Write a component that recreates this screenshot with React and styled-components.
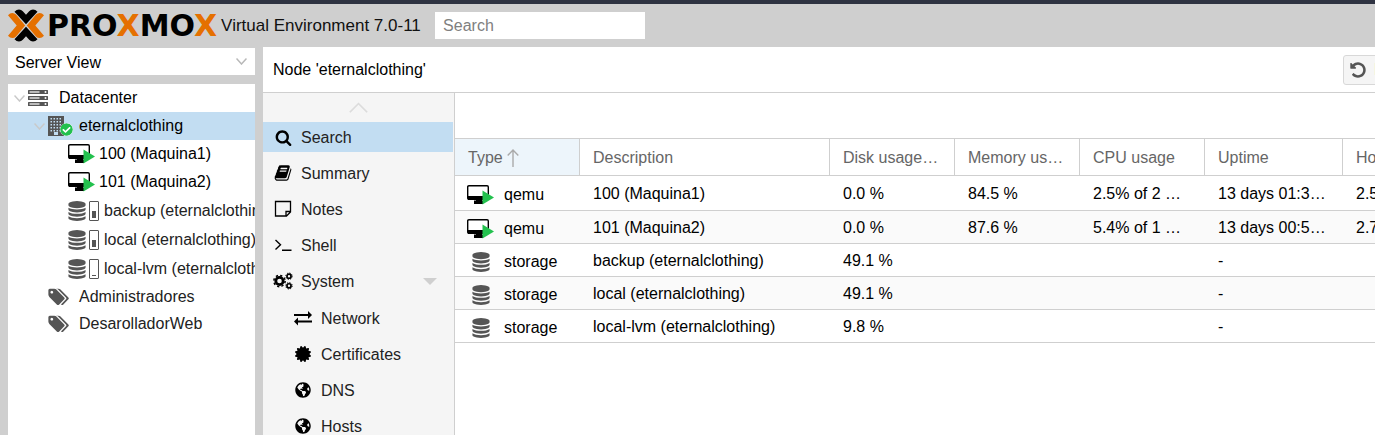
import React from "react";
import styled, { createGlobalStyle, css } from "styled-components";
import { FaGlobeAmericas, FaCertificate, FaCheckCircle } from "react-icons/fa";

const GlobalStyle = createGlobalStyle`
  *, *::before, *::after { box-sizing: border-box; }
  html, body, #root { height: 100%; }
  body {
    margin: 0;
    overflow: hidden;
    font: 16px/20px "Liberation Sans", Arial, sans-serif;
    color: #000;
    background: #cfcfcf;
  }
  button, input, select { font: inherit; color: inherit; }
  ul { list-style: none; margin: 0; padding: 0; }
  svg { display: block; flex: none; }
`;

/* ---------- icons ---------- */

const Glyph = ({ d, size = 18, box = "0 0 1792 1792", width }) => (
  <svg width={width || size} height={size} viewBox={box} fill="currentColor" aria-hidden="true">
    <path d={d} />
  </svg>
);

const paths = {
  search:
    "M1216 832q0-185-131.5-316.5t-316.5-131.5-316.5 131.5-131.5 316.5 131.5 316.5 316.5 131.5 316.5-131.5 131.5-316.5zm512 832q0 52-38 90t-90 38q-54 0-90-38l-343-342q-179 124-399 124-143 0-273.5-55.5t-225-150-150-225-55.5-273.5 55.5-273.5 150-225 225-150 273.5-55.5 273.5 55.5 225 150 150 225 55.5 273.5q0 220-124 399l343 343q37 37 37 90z",
  database:
    "M896 768q237 0 443-43t325-127v170q0 69-103 128t-280 93.5-385 34.5-385-34.5-280-93.5-103-128v-170q119 84 325 127t443 43zm0 768q237 0 443-43t325-127v170q0 69-103 128t-280 93.5-385 34.5-385-34.5-280-93.5-103-128v-170q119 84 325 127t443 43zm0-384q237 0 443-43t325-127v170q0 69-103 128t-280 93.5-385 34.5-385-34.5-280-93.5-103-128v-170q119 84 325 127t443 43zm0-1152q208 0 385 34.5t280 93.5 103 128v128q0 69-103 128t-280 93.5-385 34.5-385-34.5-280-93.5-103-128v-128q0-69 103-128t280-93.5 385-34.5z",
  tags:
    "M576 448q0-53-37.5-90.5t-90.5-37.5-90.5 37.5-37.5 90.5 37.5 90.5 90.5 37.5 90.5-37.5 37.5-90.5zm1067 576q0 53-37 90l-491 492q-39 37-91 37-53 0-90-37l-715-716q-38-37-64.5-101t-26.5-117v-416q0-52 38-90t90-38h416q53 0 117 26.5t102 64.5l715 714q37 39 37 91zm384 0q0 53-37 90l-491 492q-39 37-91 37-36 0-59-14t-53-45l470-470q37-37 37-90 0-52-37-91l-715-714q-38-38-102-64.5t-117-26.5h224q53 0 117 26.5t102 64.5l715 714q37 39 37 91z",
  undo:
    "M1664 896q0 156-61 298t-164 245-245 164-298 61q-172 0-327-72.5t-264-204.5q-7-10-6.5-22.5t8.5-20.5l137-138q10-9 25-9 16 2 23 12 73 95 179 147t225 52q104 0 198.5-40.5t163.5-109.5 109.5-163.5 40.5-198.5-40.5-198.5-109.5-163.5-163.5-109.5-198.5-40.5q-98 0-188 35.5t-160 101.5l137 138q31 30 14 69-17 40-59 40h-448q-26 0-45-19t-19-45v-448q0-42 40-59 39-17 69 14l130 129q107-101 244.5-156.5t284.5-55.5q156 0 298 61t245 164 164 245 61 298z",
  book:
    "M1703 478q40 57 18 129l-275 906q-19 64-76.5 107.5t-122.5 43.5h-923q-77 0-148.5-53.5t-99.5-131.5q-24-67-2-127 0-4 3-27t4-37q1-8-3-21.5t-3-19.5q2-11 8-21t16.5-23.5 16.5-23.5q23-38 45-91.5t30-91.5q3-10 .5-30t-.5-28q3-11 17-28t17-23q21-36 42-92t25-90q1-9-2.5-32t.5-28q4-13 22-30.5t22-22.5q19-26 42.5-84.5t27.5-96.5q1-8-3-25.5t-2-26.5q2-8 9-18t18-23 17-21q8-12 16.5-30.5t15-35 16-36 19.5-32 26.5-23.5 36-11.5 47.5 5.5l-1 3q38-9 51-9h761q74 0 114 56t18 130l-274 906q-36 119-71.5 153.5t-128.5 34.5h-869q-27 0-38 15-11 16-1 43 24 70 144 70h923q29 0 56-15.5t35-41.5l300-987q7-22 5-57 38 15 59 43zm-1064 2q-4 13 2 22.5t20 9.5h608q13 0 25.5-9.5t16.5-22.5l21-64q4-13-2-22.5t-20-9.5h-608q-13 0-25.5 9.5t-16.5 22.5zm-83 256q-4 13 2 22.5t20 9.5h608q13 0 25.5-9.5t16.5-22.5l21-64q4-13-2-22.5t-20-9.5h-608q-13 0-25.5 9.5t-16.5 22.5z",
};

const SearchIcon = () => <Glyph d={paths.search} size={17} />;
const BookIcon = () => <Glyph d={paths.book} size={18} />;
const DatabaseIcon = () => <Glyph d={paths.database} size={20} />;
const TagsIcon = () => <Glyph d={paths.tags} size={20} width={22} box="0 0 2048 1792" />;
const UndoIcon = () => <Glyph d={paths.undo} size={18} />;

const NoteIcon = () => (
  <svg width="18" height="18" viewBox="0 0 18 18" fill="none" stroke="currentColor" strokeWidth="1.3" aria-hidden="true">
    <path d="M1.500 1.500h15v10.500l-4 4H1.500zM16.500 11.500h-4.500v4.500" />
  </svg>
);
const ShellIcon = () => (
  <svg width="18" height="18" viewBox="0 0 18 18" fill="none" stroke="currentColor" strokeWidth="1.4" aria-hidden="true">
    <path d="M1.500 4l5 4.700-5 4.700M8 14.300h9.500" />
  </svg>
);
const ExchangeIcon = () => (
  <svg width="18" height="18" viewBox="0 0 18 18" fill="currentColor" aria-hidden="true">
    <path d="M0 5h14V2l4 4-4 4V7H0zM18 11.500H4V8.500L0 12.500l4 4V13.500h14z" />
  </svg>
);
const Gear = ({ x, y, r, hub, tooth }) => {
  const rim = r - tooth / 2;
  const step = (2 * Math.PI * rim) / 16;
  return (
    <g fill="none" stroke="currentColor">
      <circle cx={x} cy={y} r={(hub + r - tooth) / 2} strokeWidth={r - tooth - hub + 0.4} />
      <circle cx={x} cy={y} r={rim} strokeWidth={tooth} strokeDasharray={`${step} ${step}`} />
    </g>
  );
};
const CogsIcon = () => (
  <svg width="20" height="18" viewBox="0 0 20 18" aria-hidden="true">
    <Gear x={6.500} y={9} r={6.400} hub={2.500} tooth={1.500} />
    <Gear x={16} y={4.200} r={3.700} hub={1.400} tooth={1} />
    <Gear x={16} y={13.800} r={3.700} hub={1.400} tooth={1} />
  </svg>
);
const MonitorIcon = () => (
  <svg width="27" height="20" viewBox="0 0 27 20" aria-hidden="true">
    <rect x="0.700" y="0.700" width="20.600" height="13.600" rx="1.200" fill="#fff" stroke="#000" strokeWidth="1.400" />
    <path d="M1 11h20v3.500H1zM9 14h6v3.500H9zM7 15.500h9V19H7z" />
    <path d="M15.500 5.500L27 12.500 15.500 19.500z" fill="#23c14e" />
  </svg>
);
const ServerIcon = () => (
  <svg width="20" height="16" viewBox="0 0 20 16" fill="#555" aria-hidden="true">
    {[0, 6, 12].map((y) => (
      <g key={y}>
        <rect y={y} width="20" height="4" rx="0.500" />
        <rect x="1.500" y={y + 1.400} width="10" height="1.200" fill="#fff" />
        <circle cx="17.500" cy={y + 2} r="1" fill="#fff" />
      </g>
    ))}
  </svg>
);
const BuildingIcon = () => (
  <svg width="16" height="20" viewBox="0 0 16 20" fill="#555" aria-hidden="true">
    <path d="M0 0h16v20H0z" />
    <g fill="#c2ddf2">
      {[2, 5, 8, 11, 14].map((y) =>
        [2, 5, 8, 11].map((x) => <rect key={`${x}-${y}`} x={x + 0.5} y={y} width="1.500" height="1.500" />)
      )}
      <rect x="6" y="16" width="4" height="3" />
    </g>
  </svg>
);
const Chevron = ({ w = 11, h = 7, up, color = "#c9c9c9", stroke = 1.5 }) => (
  <svg width={w} height={h} viewBox="0 0 11 7" preserveAspectRatio="none" fill="none" stroke={color} strokeWidth={stroke} aria-hidden="true">
    <path d={up ? "M.5 6.500L5.500 1l5 5.500" : "M.5.500l5 5.500 5-5.500"} />
  </svg>
);
const SortArrow = () => (
  <svg width="12" height="18" viewBox="0 0 12 18" fill="none" stroke="#aaa" strokeWidth="1.400" aria-hidden="true">
    <path d="M6 18V1M.7 6.500L6 1l5.300 5.500" />
  </svg>
);
const LogoMark = () => (
  <svg width="36" height="33" viewBox="0 0 36 33" aria-hidden="true">
    <g fill="#000">
      <path d="M6.500 2.800Q8.500.5 11 .5q2.300 0 3.800 1.700L18 5.800l3.200-3.600Q22.700.5 25 .5q2.500 0 4.500 2.300L18 15.300z" />
      <path d="M6.500 30.200q2 2.300 4.500 2.300 2.300 0 3.800-1.700l3.200-3.600 3.200 3.600q1.500 1.700 3.800 1.700 2.500 0 4.500-2.300L18 17.700z" />
    </g>
    <g fill="#e57000">
      <path d="M0 6.200Q2 4 4.300 4q2.200 0 3.700 1.600l9.200 10.900L8 27.400Q6.500 29 4.300 29 2 29 0 26.800l8.700-10.300z" />
      <path d="M36 6.200Q34 4 31.700 4q-2.200 0-3.700 1.600l-9.200 10.900L28 27.400q1.500 1.600 3.700 1.600 2.300 0 4.300-2.200l-8.700-10.300z" />
    </g>
  </svg>
);

/* ---------- shell ---------- */

const Page = styled.div`
  height: 100%;
  display: flex;
  flex-direction: column;
  border-top: 4px solid #2f3342;
`;
const Header = styled.header`
  flex: none;
  height: 43px;
  padding: 0 8px;
  display: flex;
  align-items: center;
`;
const Wordmark = styled.span`
  margin-left: 3px;
  font: bold 30px/32px "DejaVu Sans", sans-serif;
  i { font-style: normal; color: #e57000; }
`;
const Version = styled.span`
  flex: 0 0 210px;
  margin: 0 4px;
  font-size: 17px;
  white-space: nowrap;
  color: #111;
`;
const SearchBox = styled.input`
  width: 210px;
  height: 27px;
  padding: 0 8px;
  border: 0;
  background: #fff;
  &::placeholder { color: #808080; opacity: 1; }
`;
const Body = styled.div`
  flex: 1;
  min-height: 0;
  display: flex;
  gap: 8px;
  padding-left: 8px;
`;

/* ---------- resource tree ---------- */

const Sidebar = styled.aside`
  flex: 0 0 247px;
  min-width: 0;
  padding-top: 1px;
  display: flex;
  flex-direction: column;
  gap: 9px;
`;
const ViewPicker = styled.label`
  display: grid;
  align-items: center;
  background: #fff;
  & > * { grid-area: 1 / 1; }
  & > svg { justify-self: end; margin-right: 8px; pointer-events: none; }
`;
const ViewSelect = styled.select`
  appearance: none;
  height: 27px;
  padding: 2px 7px 0;
  border: 0;
  background: transparent;
`;
const Tree = styled.ul`
  flex: 1;
  overflow: hidden;
  background: #fff;
`;
const rowHeights = { node: 28, vm: 28, storage: 29, pool: 27 };
const TreeRow = styled.li`
  height: ${(p) => rowHeights[p.$kind]}px;
  padding-left: ${(p) => p.$indent}px;
  display: flex;
  align-items: center;
  white-space: nowrap;
  color: ${(p) => (p.$kind === "storage" || p.$kind === "pool" ? "#222" : "#000")};
  ${(p) => p.$selected && css`background: #c2ddf2;`}
  & > svg { color: #555; }
`;
const TreeLabel = styled.span`
  padding-left: ${(p) => p.$gap}px;
`;
const Twisty = styled.span`
  width: 14px;
`;
const HostIcon = styled.span`
  position: relative;
  width: 25px;
  & > svg:last-child {
    position: absolute;
    left: 12px;
    top: 7px;
    background: #fff;
    border-radius: 50%;
    color: #23c14e;
  }
`;
const Gauge = styled.span`
  flex: none;
  width: 10px;
  height: 20px;
  margin-left: 2px;
  padding: 2px;
  border: 1px solid #555;
  border-radius: 1px;
  display: flex;
  align-items: flex-end;
  &::after {
    content: "";
    flex: 1;
    height: ${(p) => p.$fill}px;
    background: #555;
  }
`;

const StorageRow = ({ name, fill }) => (
  <TreeRow $kind="storage" $indent={59}>
    <DatabaseIcon />
    <Gauge $fill={fill} />
    <TreeLabel $gap={5}>{name}</TreeLabel>
  </TreeRow>
);

/* ---------- content panel ---------- */

const Panel = styled.main`
  flex: 1;
  min-width: 0;
  display: flex;
  flex-direction: column;
  background: #fff;
`;
const TitleBar = styled.div`
  flex: none;
  height: 46px;
  padding-left: 10px;
  border-bottom: 1px solid #cfcfcf;
  display: flex;
  align-items: center;
`;
const Title = styled.h1`
  flex: 1;
  margin: 0;
  font-size: 16px;
  font-weight: normal;
`;
const Actions = styled.div`
  flex: 0 0 32px;
  overflow: hidden;
`;
const ActionButton = styled.button`
  height: 30px;
  padding: 0 10px 0 5px;
  border: 1px solid #d8d8d8;
  border-radius: 3px;
  background: #f5f5f5;
  color: #555;
  display: flex;
  align-items: center;
  gap: 7px;
`;
const Split = styled.div`
  flex: 1;
  min-height: 0;
  display: flex;
`;
const Menu = styled.nav`
  flex: 0 0 192px;
  overflow: hidden;
  background: #f5f5f5;
  border-right: 1px solid #cfcfcf;
`;
const MenuScroller = styled.button`
  width: 100%;
  height: 29px;
  padding: 0;
  border: 0;
  background: none;
  display: grid;
  place-items: center;
`;
const MenuList = styled.ul`
  display: grid;
  gap: 6px;
  ${(p) => p.$nested && css`padding-top: 7px;`}
`;
const MenuLink = styled.a`
  height: 30px;
  margin-right: 1px;
  padding: 0 16px 0 ${(p) => (p.$nested ? 31 : 11)}px;
  display: flex;
  align-items: center;
  color: #222;
  text-decoration: none;
  ${(p) => p.$active && css`background: #c2ddf2;`}
`;
const MenuIcon = styled.span`
  width: 18px;
  margin-right: 9px;
  display: grid;
  place-content: center;
  color: #000;
`;
const MenuText = styled.span`
  flex: 1;
  padding-top: 2px;
`;
const Caret = styled.span`
  border: 7px solid transparent;
  border-top-color: #cfcfcf;
  border-bottom: 0;
`;

const MenuItem = ({ icon, label, active, nested, expandable, children }) => (
  <li>
    <MenuLink href="#" $active={active} $nested={nested}>
      <MenuIcon>{icon}</MenuIcon>
      <MenuText>{label}</MenuText>
      {expandable && <Caret />}
    </MenuLink>
    {children}
  </li>
);

const GridPane = styled.section`
  flex: 1;
  min-width: 0;
  overflow: hidden;
`;
const GridToolbar = styled.div`
  height: 45px;
`;
const Grid = styled.table`
  width: 100%;
  min-width: 1013px;
  table-layout: fixed;
  border-collapse: separate;
  border-spacing: 0;
`;
const HeadCell = styled.th`
  height: 38px;
  padding: 1px 12px 0 13px;
  border: solid #cfcfcf;
  border-width: 1px 1px 1px 0;
  font-weight: normal;
  text-align: left;
  white-space: nowrap;
  color: #666;
  background: ${(p) => (p.$sorted ? "#edf5fb" : "#fff")};
`;
const SortLabel = styled.span`
  display: flex;
  align-items: center;
  gap: 4px;
`;
const GridRow = styled.tr`
  height: 33px;
  &:first-child { height: 35px; }
  &:nth-child(even) { background: #fafafa; }
`;
const Cell = styled.td`
  padding: 1px 12px 0 13px;
  border-bottom: 1px solid #cfcfcf;
  white-space: nowrap;
`;
const TypeLabel = styled.span`
  display: grid;
  grid-template-columns: 25px auto;
  justify-content: start;
  align-items: center;
  justify-items: center;
  gap: 11px;
  padding-top: 3px;
  & > svg { color: #555; }
`;

const columns = [
  ["Type", 125],
  ["Description", 250],
  ["Disk usage…", 125],
  ["Memory us…", 125],
  ["CPU usage", 125],
  ["Uptime", 138],
  ["Host CPU usage"],
];
const rows = [
  ["qemu", "100 (Maquina1)", "0.0 %", "84.5 %", "2.5% of 2 …", "13 days 01:3…", "2.5%"],
  ["qemu", "101 (Maquina2)", "0.0 %", "87.6 %", "5.4% of 1 …", "13 days 00:5…", "2.7%"],
  ["storage", "backup (eternalclothing)", "49.1 %", "", "", "-", ""],
  ["storage", "local (eternalclothing)", "49.1 %", "", "", "-", ""],
  ["storage", "local-lvm (eternalclothing)", "9.8 %", "", "", "-", ""],
];

export default function App() {
  return (
    <Page>
      <GlobalStyle />
      <Header>
        <LogoMark />
        <Wordmark>PRO<i>X</i>MO<i>X</i></Wordmark>
        <Version>Virtual Environment 7.0-11</Version>
        <SearchBox type="text" placeholder="Search" aria-label="Search" />
      </Header>
      <Body>
        <Sidebar>
          <ViewPicker>
            <ViewSelect aria-label="View" defaultValue="server">
              <option value="server">Server View</option>
            </ViewSelect>
            <Chevron color="#b8b8b8" />
          </ViewPicker>
          <Tree>
            <TreeRow $kind="node" $indent={6}>
              <Twisty><Chevron /></Twisty>
              <ServerIcon />
              <TreeLabel $gap={11}>Datacenter</TreeLabel>
            </TreeRow>
            <TreeRow $kind="node" $indent={26} $selected>
              <Twisty><Chevron /></Twisty>
              <HostIcon><BuildingIcon /><FaCheckCircle size={13} /></HostIcon>
              <TreeLabel $gap={6}>eternalclothing</TreeLabel>
            </TreeRow>
            {["100 (Maquina1)", "101 (Maquina2)"].map((name) => (
              <TreeRow key={name} $kind="vm" $indent={60}>
                <MonitorIcon />
                <TreeLabel $gap={4}>{name}</TreeLabel>
              </TreeRow>
            ))}
            <StorageRow name="backup (eternalclothing)" fill={7} />
            <StorageRow name="local (eternalclothing)" fill={7} />
            <StorageRow name="local-lvm (eternalclothing)" fill={1} />
            {["Administradores", "DesarolladorWeb"].map((name) => (
              <TreeRow key={name} $kind="pool" $indent={39}>
                <TagsIcon />
                <TreeLabel $gap={10}>{name}</TreeLabel>
              </TreeRow>
            ))}
          </Tree>
        </Sidebar>
        <Panel>
          <TitleBar>
            <Title>Node 'eternalclothing'</Title>
            <Actions>
              <ActionButton type="button"><UndoIcon />Reboot</ActionButton>
            </Actions>
          </TitleBar>
          <Split>
            <Menu aria-label="Node">
              <MenuScroller type="button" aria-label="Scroll up">
                <Chevron up w={19} h={11} color="#dcdcdc" stroke={1} />
              </MenuScroller>
              <MenuList>
                <MenuItem icon={<SearchIcon />} label="Search" active />
                <MenuItem icon={<BookIcon />} label="Summary" />
                <MenuItem icon={<NoteIcon />} label="Notes" />
                <MenuItem icon={<ShellIcon />} label="Shell" />
                <MenuItem icon={<CogsIcon />} label="System" expandable>
                  <MenuList $nested>
                    <MenuItem nested icon={<ExchangeIcon />} label="Network" />
                    <MenuItem nested icon={<FaCertificate size={16} />} label="Certificates" />
                    <MenuItem nested icon={<FaGlobeAmericas size={16} />} label="DNS" />
                    <MenuItem nested icon={<FaGlobeAmericas size={16} />} label="Hosts" />
                  </MenuList>
                </MenuItem>
              </MenuList>
            </Menu>
            <GridPane>
              <GridToolbar />
              <Grid>
                <colgroup>
                  {columns.map(([name, width]) => <col key={name} width={width} />)}
                </colgroup>
                <thead>
                  <tr>
                    {columns.map(([name], i) => (
                      <HeadCell key={name} $sorted={i === 0}>
                        {i === 0 ? <SortLabel>{name}<SortArrow /></SortLabel> : name}
                      </HeadCell>
                    ))}
                  </tr>
                </thead>
                <tbody>
                  {rows.map(([type, ...cells]) => (
                    <GridRow key={cells[0]}>
                      <Cell>
                        <TypeLabel>{type === "qemu" ? <MonitorIcon /> : <DatabaseIcon />}{type}</TypeLabel>
                      </Cell>
                      {cells.map((text, i) => <Cell key={i}>{text}</Cell>)}
                    </GridRow>
                  ))}
                </tbody>
              </Grid>
            </GridPane>
          </Split>
        </Panel>
      </Body>
    </Page>
  );
}
